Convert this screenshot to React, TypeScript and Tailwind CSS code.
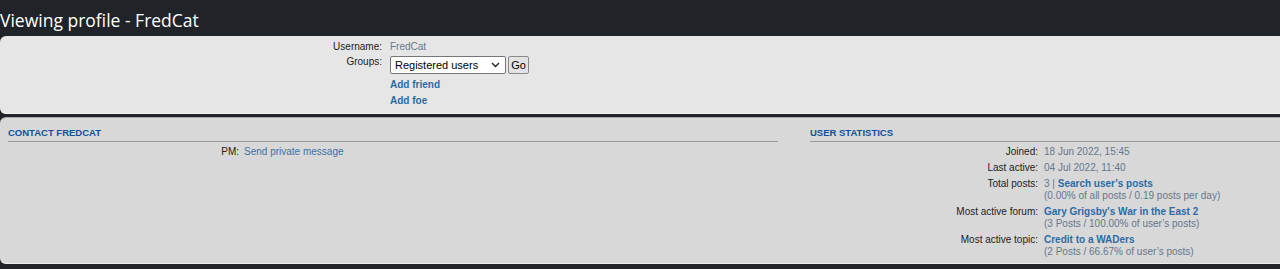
import React from "react";

const Row = ({ label, children }: { label: string; children: React.ReactNode }) => (
  <div className="flex py-[2px] leading-[12px]">
    <div className="w-[234px] shrink-0 text-right pr-[6px] text-[#222]">{label}</div>
    <div className="text-[#66778c]">{children}</div>
  </div>
);

export default function App() {
  return (
    <div
      className="w-[1280px] h-[269px] overflow-hidden bg-[#202327] text-[10px]"
      style={{ fontFamily: '"Liberation Sans", Arial, sans-serif' }}
    >
      <div className="h-[36px] pt-[8px]">
        <h1
          className="text-white text-[17.5px] leading-[24px] font-normal"
          style={{ fontFamily: '"Open Sans", "Noto Sans", sans-serif' }}
        >
          Viewing profile - FredCat
        </h1>
      </div>

      <div className="w-[1600px] h-[78px] bg-[#e6e6e6] rounded-l-[6px] border-b border-[#f4f4f4] pt-[5px]">
        <div className="flex leading-[12px]">
          <div className="w-[390px] shrink-0 text-right pr-[8px] text-[#222]">Username:</div>
          <div className="text-[#66778c]">FredCat</div>
        </div>
        <div className="flex mt-[3px]">
          <div className="w-[390px] shrink-0 text-right pr-[8px] text-[#222] leading-[12px]">Groups:</div>
          <div className="flex gap-[2px]">
            <div className="w-[116px] h-[18px] bg-white border border-[#767676] rounded-[2px] flex items-center justify-between pl-[4px] pr-[5px] text-[11px] text-black">
              <span>Registered users</span>
              <svg width="9" height="6" viewBox="0 0 9 6" fill="none">
                <path d="M1 1l3.5 3.5L8 1" stroke="#222" strokeWidth="1.4" />
              </svg>
            </div>
            <div className="w-[21px] h-[18px] bg-[#e3e3e3] border border-[#8a8a8a] rounded-[2px] flex items-center justify-center text-[11px] text-black">
              Go
            </div>
          </div>
        </div>
        <div className="pl-[390px] mt-[5px] leading-[12px] font-bold text-[#2c6ca6]">Add friend</div>
        <div className="pl-[390px] mt-[4px] leading-[12px] font-bold text-[#2c6ca6]">Add foe</div>
      </div>

      <div className="h-[3px]" />

      <div className="w-[1600px] h-[147px] bg-[#d8d8d8] rounded-l-[6px] border-t border-[#a8a8a8] border-b border-b-[#ececec] flex gap-[32px] pl-[8px] pt-[9px]">
        <div className="w-[770px] shrink-0">
          <h3 className="text-[9.5px] leading-[12px] font-bold uppercase text-[#115098] border-b border-[#999] pb-[2px]">
            Contact FredCat
          </h3>
          <div className="pt-[2px]">
            <div className="flex py-[2px] leading-[12px]">
              <div className="w-[236px] shrink-0 text-right pr-[5px] text-[#222]">PM:</div>
              <div className="text-[#3c71a6]">Send private message</div>
            </div>
          </div>
        </div>
        <div className="w-[770px] shrink-0">
          <h3 className="text-[9.5px] leading-[12px] font-bold uppercase text-[#115098] border-b border-[#999] pb-[2px]">
            User statistics
          </h3>
          <div className="pt-[2px]">
            <Row label="Joined:">18 Jun 2022, 15:45</Row>
            <Row label="Last active:">04 Jul 2022, 11:40</Row>
            <Row label="Total posts:">
              3 | <span className="font-bold text-[#2c6ca6]">Search user’s posts</span>
              <br />
              (0.00% of all posts / 0.19 posts per day)
            </Row>
            <Row label="Most active forum:">
              <span className="font-bold text-[#2c6ca6]">Gary Grigsby's War in the East 2</span>
              <br />
              (3 Posts / 100.00% of user’s posts)
            </Row>
            <Row label="Most active topic:">
              <span className="font-bold text-[#2c6ca6]">Credit to a WADers</span>
              <br />
              (2 Posts / 66.67% of user’s posts)
            </Row>
          </div>
        </div>
      </div>
    </div>
  );
}
